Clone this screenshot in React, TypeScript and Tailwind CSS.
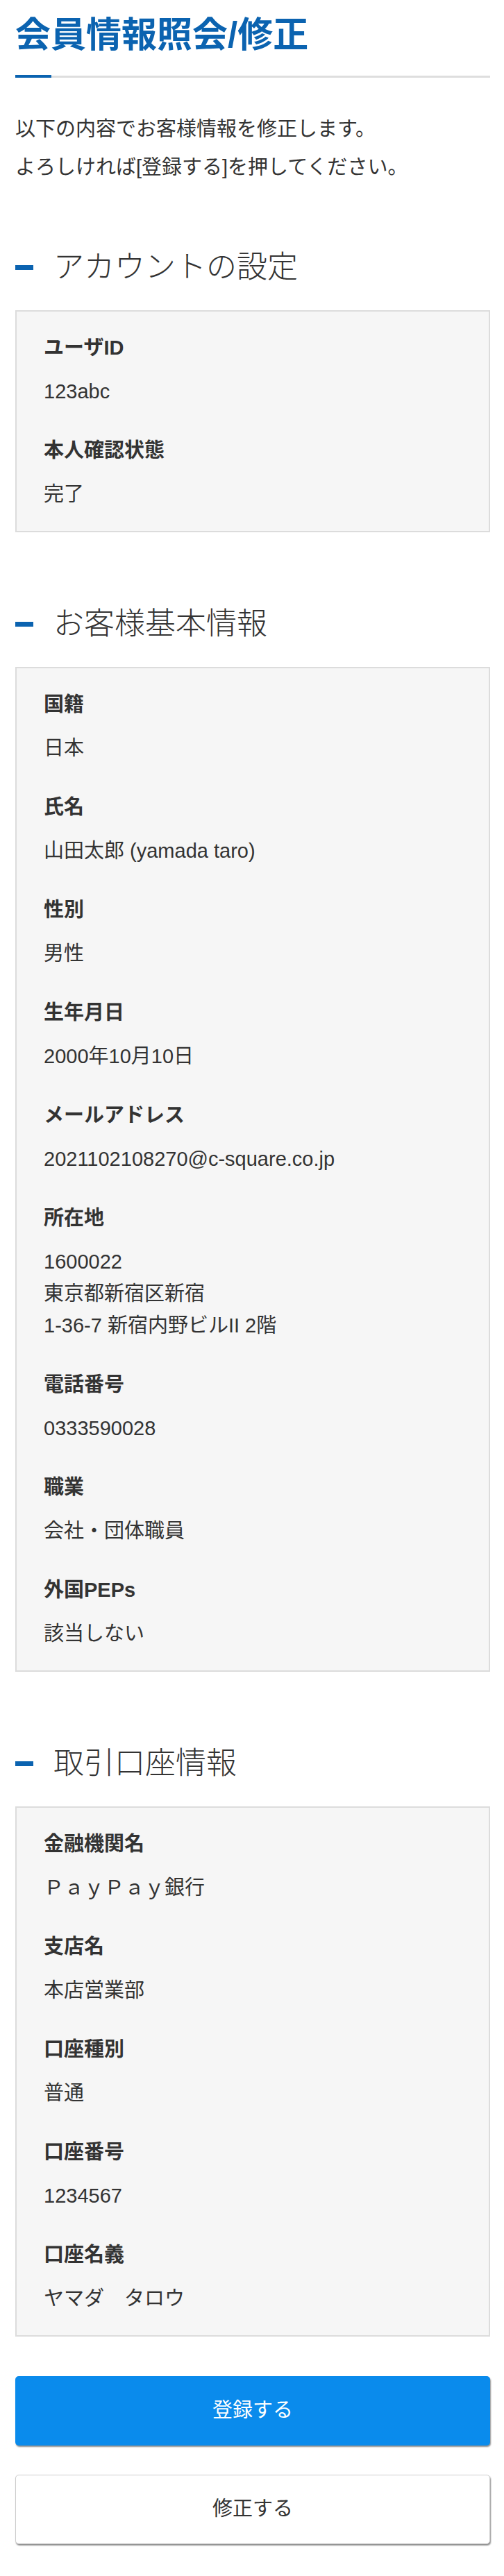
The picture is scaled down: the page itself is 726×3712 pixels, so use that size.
import React from "react";

type Item = { label: string; values: string[] };

const account: Item[] = [
  { label: "ユーザID", values: ["123abc"] },
  { label: "本人確認状態", values: ["完了"] },
];

const basic: Item[] = [
  { label: "国籍", values: ["日本"] },
  { label: "氏名", values: ["山田太郎 (yamada taro)"] },
  { label: "性別", values: ["男性"] },
  { label: "生年月日", values: ["2000年10月10日"] },
  { label: "メールアドレス", values: ["2021102108270@c-square.co.jp"] },
  { label: "所在地", values: ["1600022", "東京都新宿区新宿", "1-36-7 新宿内野ビルII 2階"] },
  { label: "電話番号", values: ["0333590028"] },
  { label: "職業", values: ["会社・団体職員"] },
  { label: "外国PEPs", values: ["該当しない"] },
];

const bank: Item[] = [
  { label: "金融機関名", values: ["ＰａｙＰａｙ銀行"] },
  { label: "支店名", values: ["本店営業部"] },
  { label: "口座種別", values: ["普通"] },
  { label: "口座番号", values: ["1234567"] },
  { label: "口座名義", values: ["ヤマダ　タロウ"] },
];

function Heading({ text, first }: { text: string; first?: boolean }) {
  return (
    <h2
      className={`flex items-center gap-[29px] ${first ? "mt-[86px]" : "mt-[102px]"} mb-[32px]`}
    >
      <span className="block w-[26px] h-[7px] bg-[#0b63b0]" />
      <span className="text-[44px] leading-[60px] font-light text-[#333]">{text}</span>
    </h2>
  );
}

function Box({ items }: { items: Item[] }) {
  return (
    <div className="border-2 border-[#dcdcdc] bg-[#f6f6f6] pl-[39px] pr-[20px] pt-[29px] pb-[30px] flex flex-col gap-[39px]">
      {items.map((it) => (
        <dl key={it.label} className="flex flex-col">
          <dt className="text-[29px] leading-[46px] font-bold text-[#333] mb-[17px]">{it.label}</dt>
          {it.values.map((v) => (
            <dd key={v} className="text-[29px] leading-[46px] text-[#333]">
              {v}
            </dd>
          ))}
        </dl>
      ))}
    </div>
  );
}

export default function App() {
  return (
    <div
      className="bg-white min-h-[3712px] pl-[22px] pr-[20px] pt-[15px] pb-[42px] text-[#333]"
      style={{ fontFamily: '"Liberation Sans", "Noto Sans CJK JP", sans-serif' }}
    >
      <h1 className="text-[51px] leading-[72px] font-bold text-[#0b63b0]">会員情報照会/修正</h1>
      <div className="mt-[21px] flex items-end h-[4px]">
        <div className="w-[52px] h-[4px] bg-[#0b63b0]" />
        <div className="flex-1 h-[3px] bg-[#dedede]" />
      </div>
      <div className="mt-[47px] text-[29px] leading-[55px]">
        <p>以下の内容でお客様情報を修正します。</p>
        <p>よろしければ[登録する]を押してください。</p>
      </div>

      <Heading text="アカウントの設定" first />
      <Box items={account} />

      <Heading text="お客様基本情報" />
      <Box items={basic} />

      <Heading text="取引口座情報" />
      <Box items={bank} />

      <div className="mt-[57px] flex flex-col gap-[42px]">
        <button className="h-[100px] w-full rounded-[5px] bg-[#0a8bec] text-white text-[29px] shadow-[1px_2px_2px_rgba(0,0,0,0.45)]">
          登録する
        </button>
        <button className="h-[100px] w-full rounded-[5px] bg-white border border-[#cccccc] text-[#333] text-[29px] shadow-[1px_2px_2px_rgba(0,0,0,0.45)]">
          修正する
        </button>
      </div>
    </div>
  );
}
